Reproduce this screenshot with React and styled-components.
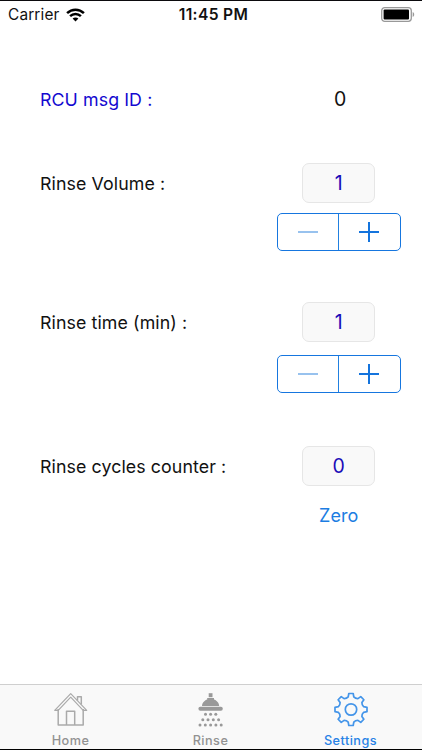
import React, {Component} from 'react';
import styled, {createGlobalStyle} from 'styled-components';

const GlobalStyle = createGlobalStyle`
    body {
        margin: 0;
        background: #fff;
        font-family: Inter, "Liberation Sans", sans-serif;
    }
`;

const Screen = styled.div`
    box-sizing: border-box;
    display: flex;
    flex-direction: column;
    width: 422px;
    height: 750px;
    border-top: 1px solid #0b0a0d;
    border-bottom: 1px solid #000;
    background: #fff;
    overflow: hidden;
`;

const StatusBar = styled.header`
    display: grid;
    grid-template-columns: 1fr auto 1fr;
    align-items: center;
    height: 26px;
    padding: 0 7px 0 8px;
    color: #111;
`;

const CarrierContainer = styled.div`
    display: flex;
    align-items: center;
    gap: 6px;
    padding-top: 1px;
    font-size: 15.4px;
    letter-spacing: 0.15px;
`;

const Clock = styled.div`
    padding: 1px 0 0 4px;
    font-size: 15.6px;
    font-weight: 600;
    letter-spacing: 0.35px;
`;

const BatteryContainer = styled.div`
    display: flex;
    justify-content: flex-end;
`;

const Form = styled.main`
    flex: 1;
    padding: 52px 21.5px 0 40px;
`;

const Row = styled.div`
    display: flex;
    justify-content: space-between;
    height: ${props => props.$height}px;
`;

const Label = styled.div`
    height: 41px;
    line-height: 41px;
    font-size: 17.8px;
    letter-spacing: 0.09px;
    color: ${props => props.$color || '#111'};
`;

const Controls = styled.div`
    display: flex;
    flex-direction: column;
    align-items: center;
    width: 123.5px;
`;

const PlainValue = styled.div`
    padding-left: 3px;
    color: #111;
    font-size: 19.5px;
    line-height: 41px;
`;

const Field = styled.div`
    box-sizing: border-box;
    width: 73px;
    height: 40px;
    margin-bottom: ${props => props.$gap || 10}px;
    border: 1px solid #e6e6e6;
    border-radius: 7px;
    background: #f9f9f9;
    color: #1c0cb8;
    font-size: 19.5px;
    line-height: 39px;
    text-align: center;
`;

const StepperContainer = styled.div`
    box-sizing: border-box;
    display: flex;
    width: 123.5px;
    height: 38px;
    border: 1px solid #1676df;
    border-radius: 5px;
`;

const StepButton = styled.button`
    flex: 1;
    display: flex;
    align-items: center;
    justify-content: center;
    padding: 0;
    border: 0;
    background: none;
    color: #1474dd;

    & + & {
        border-left: 1px solid #2180e0;
    }

    &:disabled {
        color: #8dbbed;
    }
`;

const ZeroButton = styled.button`
    padding: 0;
    border: 0;
    background: none;
    color: #1c7de2;
    font-family: inherit;
    font-size: 18px;
    line-height: 24px;
    letter-spacing: 0.1px;
`;

const TabBar = styled.nav`
    box-sizing: border-box;
    display: flex;
    justify-content: space-between;
    height: 65px;
    padding: 7px 25px 0 24px;
    border-top: 1px solid #cfcfcf;
    background: #f9f9f9;
`;

const Tab = styled.div`
    display: flex;
    flex-direction: column;
    align-items: center;
    width: 93px;
    color: ${props => props.$active ? '#2782e6' : '#929292'};
`;

const TabTitle = styled.div`
    margin-top: 5px;
    font-size: 12.7px;
    font-weight: 500;
    line-height: 16px;
    letter-spacing: 0.45px;
`;

const WifiIcon = () => (
    <svg width="19" height="14" viewBox="0 0 19 14" fill="none" stroke="#000" strokeWidth="2.5">
        <path d="M1.1 5.2C5.8 .6 13.2 .6 17.9 5.2" />
        <path d="M4.1 8.2C7.1 5.3 11.9 5.3 14.9 8.2" />
        <path d="M9.5 13.4L6.6 10.5C8.2 9 10.8 9 12.4 10.5Z" fill="#000" stroke="none" />
    </svg>
);

const BatteryIcon = () => (
    <svg width="34" height="15" viewBox="0 0 34 15">
        <rect x=".7" y=".7" width="29.6" height="13.6" rx="3" fill="none" stroke="#999" strokeWidth="1.3" />
        <rect x="2.6" y="2.6" width="25.4" height="9.8" rx="1" fill="#000" />
        <path d="M31.7 5v5c2-.8 2-4.2 0-5z" fill="#999" />
    </svg>
);

const HomeIcon = () => (
    <svg width="36" height="36" viewBox="0 0 36 36" fill="none" stroke="#aaa" strokeWidth="1.5" strokeLinejoin="round">
        <path d="M5.2 17V33H30.2V17" />
        <path d="M1.7 18.3L17.7 1.6L33.7 18.3H30.2L17.7 5.2L5.2 18.3Z" strokeWidth="1.2" />
        <path d="M13.5 33V19.3H21.7V33M24.5 8.500V4.8H28.3V12.5" />
    </svg>
);

const DROPS = [
    [12.5, 22.3], [17.6, 22.3], [22.8, 22.3],
    [9.8, 27.7], [15, 27.7], [20.3, 27.7], [25.6, 27.7],
    [7, 33], [12.3, 33], [17.6, 33], [22.9, 33], [28.2, 33],
];

const ShowerIcon = () => (
    <svg width="36" height="36" viewBox="0 0 36 36" fill="#999">
        <path d="M15.7 1.2H19.500V5.200H15.700Z" />
        <path d="M9 14C9.200 10.500 12 8.200 14.200 7.500V6H21V7.500C23.200 8.200 26 10.500 26.200 14Z" />
        <rect x="5.400" y="14.800" width="24.400" height="3.900" rx="1.900" />
        {DROPS.map(([x, y]) => <circle key={`${x}-${y}`} cx={x} cy={y} r="1.5" />)}
    </svg>
);

const TEETH = [0, 45, 90, 135, 180, 225, 270, 315];

// one tooth plus the valley after it, turned round the centre of the gear
const toothPath = angle => {
    const rad = angle * Math.PI / 180;
    const at = (x, y) => {
        const px = 18 + x * Math.cos(rad) - y * Math.sin(rad);
        const py = 17.5 + x * Math.sin(rad) + y * Math.cos(rad);
        return `${px.toFixed(2)} ${py.toFixed(2)}`;
    };
    return `L${at(-2.2, -16)} L${at(2.2, -16)} L${at(2.8, -12.6)} Q${at(4.5, -10.8)} ${at(6.93, -10.89)}`;
};

const GEAR = TEETH.map(toothPath).join(' ').replace('L', 'M') + 'Z';

const GearIcon = () => (
    <svg width="36" height="36" viewBox="0 0 36 36" fill="none" stroke="#4495e9" strokeWidth="1.7" strokeLinejoin="round">
        <path d={GEAR} />
        <circle cx="18" cy="17.5" r="5.7" />
    </svg>
);

const Stepper = ({value, onChange}) => (
    <StepperContainer>
        <StepButton disabled={value <= 1} onClick={() => onChange(value - 1)}>
            <svg width="22" height="22" stroke="currentColor" strokeWidth="1.8"><path d="M1 11H21" /></svg>
        </StepButton>
        <StepButton onClick={() => onChange(value + 1)}>
            <svg width="22" height="22" stroke="currentColor" strokeWidth="2"><path d="M1 11H21M11 1V21" /></svg>
        </StepButton>
    </StepperContainer>
);

class App extends Component {

    state = {volume: 1, time: 1, cycles: 0};

    render() {
        const {volume, time, cycles} = this.state;
        return (
            <Screen>
                <GlobalStyle />
                <StatusBar>
                    <CarrierContainer>Carrier <WifiIcon /></CarrierContainer>
                    <Clock>11:45 PM</Clock>
                    <BatteryContainer><BatteryIcon /></BatteryContainer>
                </StatusBar>
                <Form>
                    <Row $height={84}>
                        <Label $color="#1408d0">RCU msg ID :</Label>
                        <Controls><PlainValue>0</PlainValue></Controls>
                    </Row>
                    <Row $height={139}>
                        <Label>Rinse Volume :</Label>
                        <Controls>
                            <Field>{volume}</Field>
                            <Stepper value={volume} onChange={v => this.setState({volume: v})} />
                        </Controls>
                    </Row>
                    <Row $height={144}>
                        <Label>Rinse time (min) :</Label>
                        <Controls>
                            <Field $gap={13}>{time}</Field>
                            <Stepper value={time} onChange={v => this.setState({time: v})} />
                        </Controls>
                    </Row>
                    <Row $height={100}>
                        <Label>Rinse cycles counter :</Label>
                        <Controls>
                            <Field $gap={18}>{cycles}</Field>
                            <ZeroButton onClick={() => this.setState({cycles: 0})}>Zero</ZeroButton>
                        </Controls>
                    </Row>
                </Form>
                <TabBar>
                    <Tab><HomeIcon /><TabTitle>Home</TabTitle></Tab>
                    <Tab><ShowerIcon /><TabTitle>Rinse</TabTitle></Tab>
                    <Tab $active><GearIcon /><TabTitle>Settings</TabTitle></Tab>
                </TabBar>
            </Screen>
        );
    }
}


export default App;
